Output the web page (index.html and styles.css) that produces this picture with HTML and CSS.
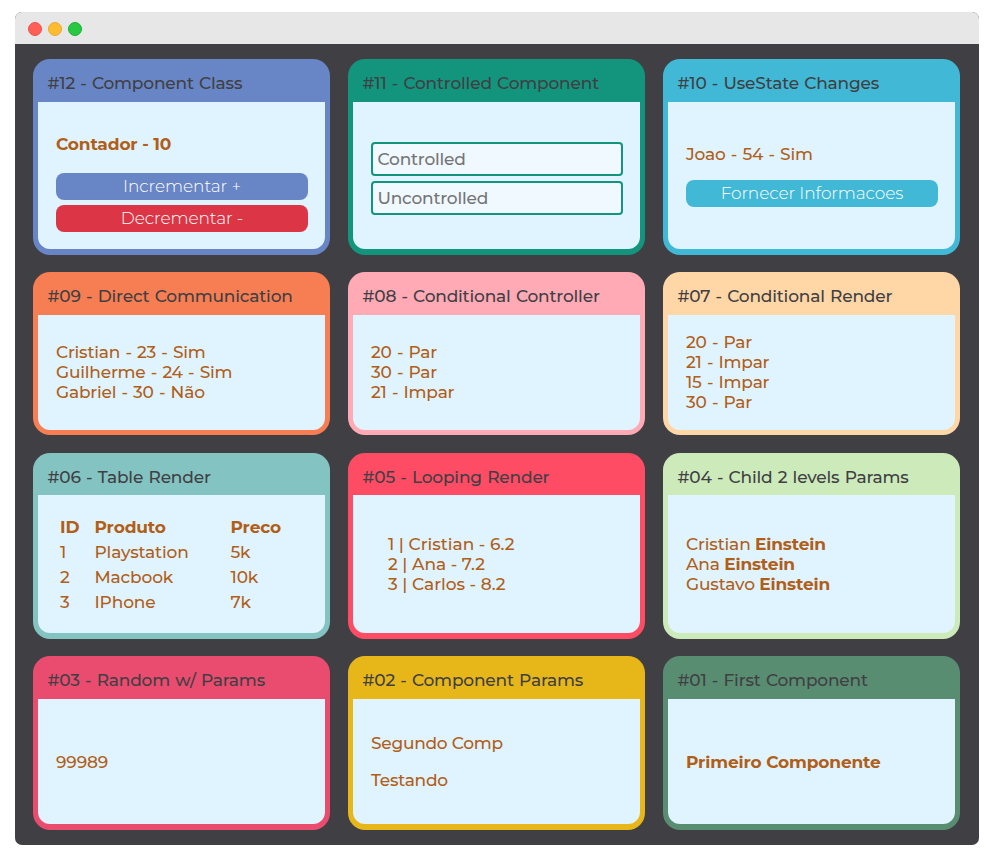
FILE: index.html
```html
<!DOCTYPE html>
<html lang="pt">
<head>
<meta charset="utf-8">
<title>Componentes</title>
<link rel="stylesheet" href="styles.css">
</head>
<body>
<main class="window">
  <header class="titlebar"><i class="dot red"></i><i class="dot yellow"></i><i class="dot green"></i></header>
  <div class="cards">
    <section class="card indigo">
      <h2>#12 - Component Class</h2>
      <div class="body counter">
        <h3>Contador - 10</h3>
        <button class="btn">Incrementar +</button>
        <button class="btn danger">Decrementar -</button>
      </div>
    </section>
    <section class="card teal">
      <h2>#11 - Controlled Component</h2>
      <div class="body form">
        <input class="field" placeholder="Controlled">
        <input class="field" placeholder="Uncontrolled">
      </div>
    </section>
    <section class="card cyan">
      <h2>#10 - UseState Changes</h2>
      <div class="body dashed">
        <div class="info">Joao - 54 - Sim</div>
        <button class="btn">Fornecer Informacoes</button>
      </div>
    </section>
    <section class="card orange">
      <h2>#09 - Direct Communication</h2>
      <div class="body dashed">
        <div>Cristian - 23 - Sim</div>
        <div>Guilherme - 24 - Sim</div>
        <div>Gabriel - 30 - Não</div>
      </div>
    </section>
    <section class="card pink">
      <h2>#08 - Conditional Controller</h2>
      <div class="body dashed">
        <div>20 - Par</div>
        <div>30 - Par</div>
        <div>21 - Impar</div>
      </div>
    </section>
    <section class="card peach">
      <h2>#07 - Conditional Render</h2>
      <div class="body dashed">
        <div>20 - Par</div>
        <div>21 - Impar</div>
        <div>15 - Impar</div>
        <div>30 - Par</div>
      </div>
    </section>
    <section class="card aqua">
      <h2>#06 - Table Render</h2>
      <div class="body">
        <table>
          <tr><th>ID</th><th>Produto</th><th>Preco</th></tr>
          <tr><td>1</td><td>Playstation</td><td>5k</td></tr>
          <tr><td>2</td><td>Macbook</td><td>10k</td></tr>
          <tr><td>3</td><td>IPhone</td><td>7k</td></tr>
        </table>
      </div>
    </section>
    <section class="card red-card">
      <h2>#05 - Looping Render</h2>
      <div class="body list">
        <div>1 | Cristian - 6.2</div>
        <div>2 | Ana - 7.2</div>
        <div>3 | Carlos - 8.2</div>
      </div>
    </section>
    <section class="card lime">
      <h2>#04 - Child 2 levels Params</h2>
      <div class="body">
        <div>Cristian <b>Einstein</b></div>
        <div>Ana <b>Einstein</b></div>
        <div>Gustavo <b>Einstein</b></div>
      </div>
    </section>
    <section class="card rose">
      <h2>#03 - Random w/ Params</h2>
      <div class="body"><div>99989</div></div>
    </section>
    <section class="card gold">
      <h2>#02 - Component Params</h2>
      <div class="body paragraphs">
        <div>Segundo Comp</div>
        <div>Testando</div>
      </div>
    </section>
    <section class="card green-card">
      <h2>#01 - First Component</h2>
      <div class="body"><b>Primeiro Componente</b></div>
    </section>
  </div>
</main>
</body>
</html>
```
FILE: styles.css
```css
* { box-sizing: border-box; }
body { margin: 0; padding: 12px 14px 11px 15px; background: #fff; font: 500 17px/20px Montserrat, Inter, sans-serif; }
.window { height: 833px; border-radius: 7px; overflow: hidden; background: #403f44; }
.titlebar { display: flex; align-items: center; gap: 6px; height: 32px; padding: 2px 13px 0; background: #e7e7e7; }
.dot { width: 14px; height: 14px; border-radius: 50%; border: 1px solid; }
.red { background: #ff5f57; border-color: #f0504c; }
.yellow { background: #febc2e; border-color: #e9a935; }
.green { background: #28c840; border-color: #1fae35; }

.cards { display: grid; grid-template-columns: repeat(3, 297px); grid-template-rows: 195.6px 163.2px 186px 173.7px; gap: 17.5px 18px; padding: 15px 18px; }
.card { display: flex; flex-direction: column; padding: 0 5px 5.5px; border-radius: 17px; background: var(--color); }
h2, h3 { margin: 0; font-size: inherit; }
h2 { flex: none; height: 42.5px; padding: 14px 9px 0 9.5px; font-weight: 500; color: #403f44; white-space: nowrap; letter-spacing: -.18px; word-spacing: .9px; }
.body { flex: 1; display: flex; flex-direction: column; justify-content: center; padding: 0 17px 0 18px; border-radius: 0 0 12px 12px; background: #e0f4ff; color: #b05e18; letter-spacing: -.15px; }
.dashed { letter-spacing: -.2px; word-spacing: .9px; }
b, h3, th { font-weight: 700; }

.indigo { --color: #6886c5; }
.teal { --color: #13947d; }
.cyan { --color: #41b8d5; }
.orange { --color: #f67e52; }
.pink { --color: #ffaab5; }
.peach { --color: #ffd6a5; }
.aqua { --color: #83c3c2; }
.red-card { --color: #ff4c65; }
.lime { --color: #cdeabb; }
.rose { --color: #ea4c6f; }
.gold { --color: #e7b71a; }
.green-card { --color: #598d72; }

.counter h3 { margin: 15px 0 14px; }
.btn { flex: none; width: 100%; height: 27px; padding: 0; border: 0; border-radius: 8px; background: var(--color); color: #fff; font: 300 17px/26px Montserrat, Inter, sans-serif; letter-spacing: -.1px; }
.counter .btn { margin-top: 5px; }
.danger { background: #dc3545; }
.info { margin-bottom: 16px; }
.form { padding-top: 2px; }
.field { width: 100%; height: 34px; margin: 5px 0 0; padding: 0 5px 0 4.5px; border: 2px solid var(--color); border-radius: 4px; background: #f0f9ff; font: inherit; letter-spacing: -.2px; }
.field::placeholder { color: #757575; opacity: 1; }
.list { padding-left: 35px; letter-spacing: 0; }
.paragraphs { gap: 17px; letter-spacing: -.25px; }
table { width: 252px; border-collapse: collapse; table-layout: fixed; }
th, td { height: 25px; padding: 0 0 0 4px; text-align: left; }
th:nth-child(1) { width: 34.5px; }
th:nth-child(2) { width: 136px; }
```
